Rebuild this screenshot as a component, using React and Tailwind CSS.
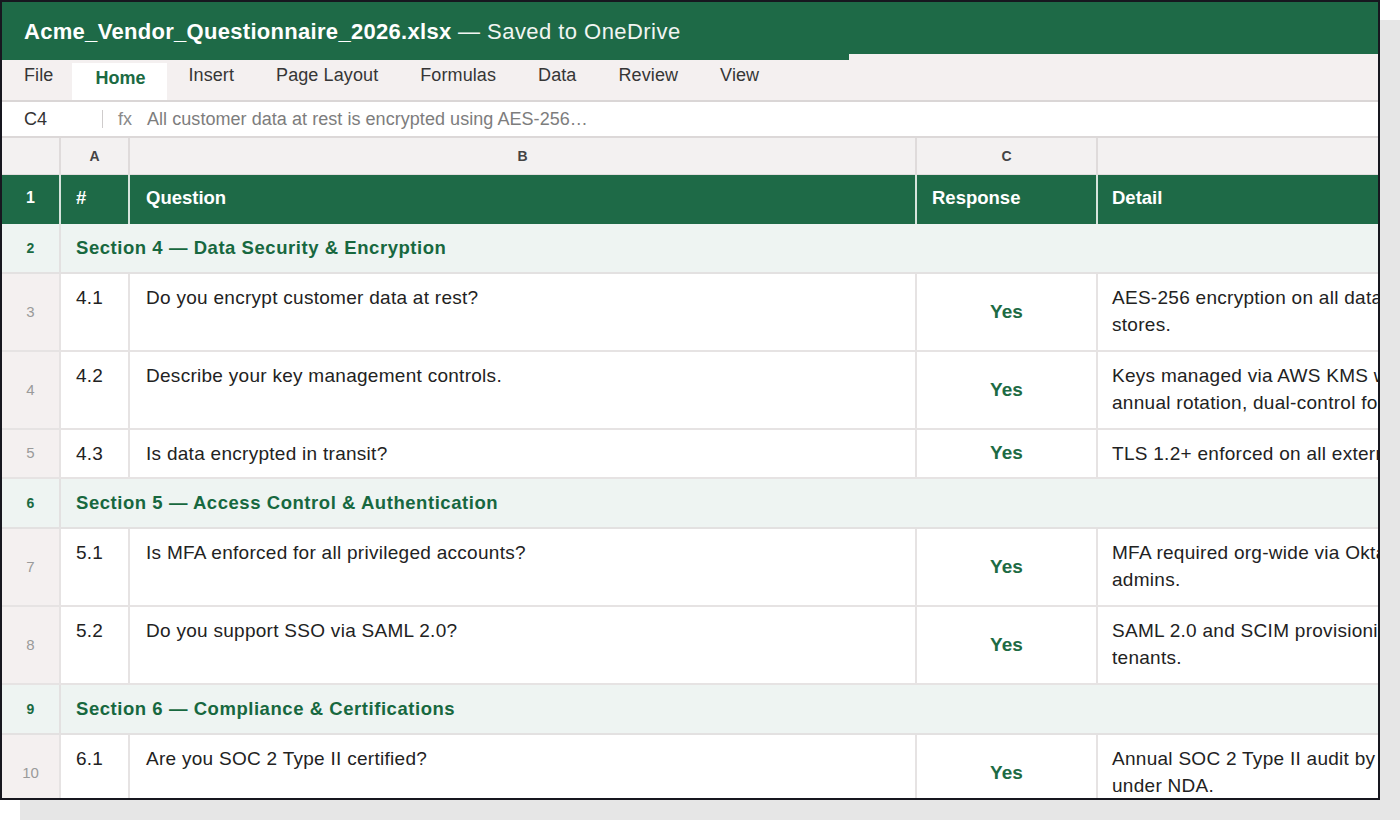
import React from "react";

const GREEN = "bg-[#1e6a47]";

const rows = [
  { type: "section", n: 2, text: "Section 4 — Data Security & Encryption" },
  { type: "q", n: 3, id: "4.1", q: "Do you encrypt customer data at rest?", d: ["AES-256 encryption on all data", "stores."], h: "h-[78px]" },
  { type: "q", n: 4, id: "4.2", q: "Describe your key management controls.", d: ["Keys managed via AWS KMS with", "annual rotation, dual-control for key deletion."], h: "h-[78px]" },
  { type: "q", n: 5, id: "4.3", q: "Is data encrypted in transit?", d: ["TLS 1.2+ enforced on all external endpoints."], h: "h-[49px]" },
  { type: "section", n: 6, text: "Section 5 — Access Control & Authentication" },
  { type: "q", n: 7, id: "5.1", q: "Is MFA enforced for all privileged accounts?", d: ["MFA required org-wide via Okta for all", "admins."], h: "h-[78px]" },
  { type: "q", n: 8, id: "5.2", q: "Do you support SSO via SAML 2.0?", d: ["SAML 2.0 and SCIM provisioning for enterprise", "tenants."], h: "h-[78px]" },
  { type: "section", n: 9, text: "Section 6 — Compliance & Certifications" },
  { type: "q", n: 10, id: "6.1", q: "Are you SOC 2 Type II certified?", d: ["Annual SOC 2 Type II audit by an independent firm;", "under NDA."], h: "h-[78px]" },
];

const tabs = ["File", "Home", "Insert", "Page Layout", "Formulas", "Data", "Review", "View"];

function SectionRow({ n, text }) {
  return (
    <div className="flex h-[50px] shrink-0 bg-[#eef4f2] border-b-2 border-[#e3e1e1]">
      <div className="w-[59px] shrink-0 border-r-2 border-[#e3e1e1] flex items-center justify-center text-[14px] font-bold text-[#1a6a42]">
        {n}
      </div>
      <div className="flex items-center pl-[15px] text-[18.5px] font-bold tracking-[0.55px] text-[#17683f] whitespace-nowrap">
        {text}
      </div>
    </div>
  );
}

function QRow({ n, id, q, d, h }) {
  return (
    <div className={`flex ${h} shrink-0 bg-white border-b-2 border-[#e6e3e3]`}>
      <div className="w-[59px] shrink-0 bg-[#f4f0f0] border-r-2 border-[#e6e3e3] flex items-center justify-center text-[15px] text-[#9a9a9a]">
        {n}
      </div>
      <div className="w-[69px] shrink-0 border-r-2 border-[#e6e3e3] pl-[15px] pt-[10px] text-[19px] leading-[27px] tracking-[0.25px] text-[#222]">
        {id}
      </div>
      <div className="w-[787px] shrink-0 border-r-2 border-[#e6e3e3] pl-[16px] pt-[10px] text-[19px] leading-[27px] tracking-[0.28px] text-[#222] whitespace-nowrap">
        {q}
      </div>
      <div className="w-[181px] shrink-0 border-r-2 border-[#e6e3e3] flex items-center justify-center text-[19px] font-bold text-[#1d6b44]">
        Yes
      </div>
      <div className="flex-1 min-w-0 overflow-hidden pl-[14px] pt-[10px] text-[19px] leading-[27px] tracking-[0.28px] text-[#222]">
        {d.map((line, i) => (
          <div key={i} className="whitespace-nowrap">{line}</div>
        ))}
      </div>
    </div>
  );
}

export default function App() {
  return (
    <div className="w-[1400px] h-[820px] bg-white overflow-hidden font-['Liberation_Sans',Arial,Helvetica,sans-serif]">
      <div className="w-[1380px] h-[800px] border-2 border-[#17171f] shadow-[20px_20px_0_0_#e6e6e6] overflow-hidden flex flex-col bg-white">
        {/* Title bar */}
        <div className="flex h-[58px] shrink-0">
          <div className={`w-[847px] shrink-0 ${GREEN} flex items-center pl-[22px] text-white whitespace-nowrap`}>
            <span className="text-[22px] font-bold tracking-[0.3px]">Acme_Vendor_Questionnaire_2026.xlsx</span>
            <span className="text-[22px] tracking-[0.45px] text-[#f1f5f2]">&nbsp;— Saved to OneDrive</span>
          </div>
          <div className="flex-1 flex flex-col">
            <div className={`h-[52px] ${GREEN}`} />
            <div className="h-[6px] bg-[#f4f0f0]" />
          </div>
        </div>

        {/* Ribbon tabs */}
        <div className="flex h-[42px] shrink-0 items-start bg-[#f4f0f0] border-b-2 border-[#dad6d6]">
          {tabs.map((t, i) =>
            t === "Home" ? (
              <div key={t} className="mt-[3px] h-[37px] pl-[23px] pr-[22px] pt-[4px] bg-white text-[18px] leading-[22px] font-bold text-[#1b6a43]">
                {t}
              </div>
            ) : (
              <div
                key={t}
                className={`${i === 0 ? "pl-[22px] pr-[19px]" : "px-[21px]"} pt-[4px] text-[18px] leading-[22px] tracking-[0.1px] text-[#363636]`}
              >
                {t}
              </div>
            )
          )}
        </div>

        {/* Formula bar */}
        <div className="flex h-[36px] shrink-0 items-center bg-white border-b-2 border-[#dcd8d8]">
          <div className="w-[100px] shrink-0 pl-[22px] text-[18px] text-[#333]">C4</div>
          <div className="w-px h-[18px] bg-[#cfcccc]" />
          <div className="ml-[15px] text-[18px] text-[#8a8a8a]">fx</div>
          <div className="ml-[15px] text-[18px] tracking-[0.05px] text-[#7d7d7d] whitespace-nowrap">
            All customer data at rest is encrypted using AES-256…
          </div>
        </div>

        {/* Column headers */}
        <div className="flex h-[37px] shrink-0 bg-[#f3f1f1] border-b border-[#e2dede] text-[14px] font-bold text-[#444]">
          <div className="w-[59px] shrink-0 border-r-2 border-[#dfdbdb]" />
          <div className="w-[69px] shrink-0 border-r-2 border-[#dfdbdb] flex items-center justify-center">A</div>
          <div className="w-[787px] shrink-0 border-r-2 border-[#dfdbdb] flex items-center justify-center">B</div>
          <div className="w-[181px] shrink-0 border-r-2 border-[#dfdbdb] flex items-center justify-center">C</div>
          <div className="flex-1" />
        </div>

        {/* Header row */}
        <div className={`flex h-[49px] shrink-0 ${GREEN} text-white font-bold`}>
          <div className="w-[59px] shrink-0 border-r-2 border-[#d6e4dc] flex items-center justify-center pb-[3px] text-[16px]">1</div>
          <div className="w-[69px] shrink-0 border-r-2 border-[#d6e4dc] flex items-center pl-[15px] pb-[3px] text-[18.5px]">#</div>
          <div className="w-[787px] shrink-0 border-r-2 border-[#d6e4dc] flex items-center pl-[16px] pb-[3px] text-[18.5px]">Question</div>
          <div className="w-[181px] shrink-0 border-r-2 border-[#d6e4dc] flex items-center pl-[15px] pb-[3px] text-[18.5px]">Response</div>
          <div className="flex-1 flex items-center pl-[14px] pb-[3px] text-[18.5px]">Detail</div>
        </div>

        {/* Body */}
        <div className="flex-1 min-h-0 overflow-hidden flex flex-col">
          {rows.map((r) =>
            r.type === "section" ? (
              <SectionRow key={r.n} n={r.n} text={r.text} />
            ) : (
              <QRow key={r.n} {...r} />
            )
          )}
        </div>
      </div>
    </div>
  );
}
